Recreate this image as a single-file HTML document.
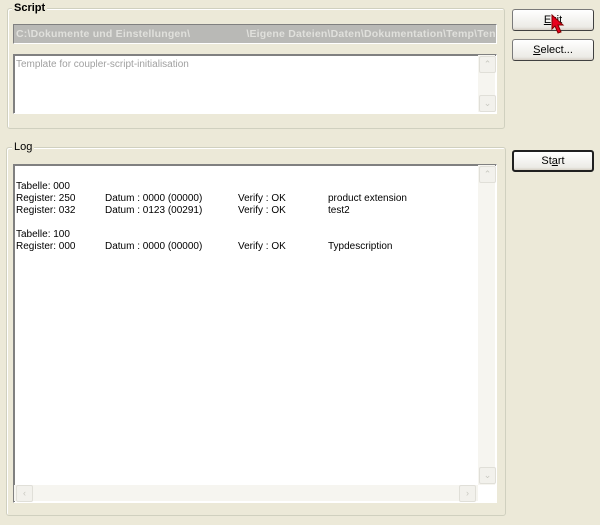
<!DOCTYPE html>
<html><head><style>
body{margin:0;width:600px;height:525px;background:#ECE9D8;font-family:"Liberation Sans",sans-serif;font-size:10px;position:relative;overflow:hidden}
.a{position:absolute}
.gb{position:absolute;border:1px solid #D0D0BF;border-radius:3px;box-shadow:1px 1px 0 #fff inset}
.gt{position:absolute;background:#ECE9D8;padding:0 2px;font-weight:bold;color:#000;font-size:11px}
.btn{position:absolute;width:82px;height:22px;border-radius:3px;background:linear-gradient(#fff,#ECEBE6 85%,#D6D0C5);text-align:center;line-height:20px;color:#000;box-sizing:border-box;border:1px solid;border-color:#7a7a7a #404040 #404040 #7a7a7a;font-size:11px}
.ta{position:absolute;background:#fff;border:1px solid;border-color:#808080 #fff #fff #808080;box-shadow:1px 1px 0 #808080 inset}
.sb{position:absolute;background:#F6F5F0}
.sbtn{position:absolute;width:15px;height:15px;border:1px solid #E0DFD8;border-radius:2px;background:#F2F1EC;color:#C8C8C0;font-size:9px;text-align:center;line-height:15px}
.l{position:absolute;white-space:pre;color:#000}
</style></head><body>
<div class="gb" style="left:7px;top:8px;width:496px;height:119px"></div>
<div class="gt" style="left:12px;top:2px">Script</div>
<div class="a" style="left:13px;top:24px;width:484px;height:20px;background:#B9B9B6;border:1px solid;border-color:#808080 #fff #fff #808080;box-sizing:border-box;color:#E0E0DC;font-weight:bold;line-height:18px;padding-left:2px;white-space:nowrap;overflow:hidden;font-size:10.5px;letter-spacing:0.2px">C:\Dokumente und Einstellungen\<span style="color:#C8C8C4">&nbsp;&nbsp;&nbsp;&nbsp;&nbsp;&nbsp;&nbsp;&nbsp;&nbsp;&nbsp;&nbsp;&nbsp;&nbsp;&nbsp;&nbsp;&nbsp;&nbsp;&nbsp;</span>\Eigene Dateien\Daten\Dokumentation\Temp\Ten</div>
<div class="ta" style="left:13px;top:54px;width:482px;height:58px">
<div class="l" style="left:2px;top:4px;color:#A0A0A0">Template for coupler-script-initialisation</div>
<div class="sb" style="left:464px;top:0;width:17px;height:57px"></div>
<div class="sbtn" style="left:465px;top:1px">&#8963;</div>
<div class="sbtn" style="left:465px;top:40px">&#8964;</div>
</div>
<div class="btn" style="left:512px;top:9px"><u>E</u>xit</div>
<div class="btn" style="left:512px;top:39px"><u>S</u>elect...</div>
<div class="btn" style="left:512px;top:150px;border:2px solid #202020;line-height:19px">St<u>a</u>rt</div>
<svg class="a" style="left:551px;top:14px" width="16" height="24"><path d="M1 1 L1 15 L4 12 L7 19 L10 18 L7 11 L12 11 Z" fill="#E8001C" stroke="#800000" stroke-width="1"/></svg>
<div class="gb" style="left:6px;top:147px;width:498px;height:367px"></div>
<div class="gt" style="left:12px;top:141px;font-weight:normal">Log</div>
<div class="ta" style="left:13px;top:164px;width:482px;height:337px">
<div class="l" style="left:2px;top:16px">Tabelle: 000</div>
<div class="l" style="left:2px;top:28px">Register: 250</div><div class="l" style="left:91px;top:28px">Datum : 0000 (00000)</div><div class="l" style="left:224px;top:28px">Verify : OK</div><div class="l" style="left:314px;top:28px">product extension</div>
<div class="l" style="left:2px;top:40px">Register: 032</div><div class="l" style="left:91px;top:40px">Datum : 0123 (00291)</div><div class="l" style="left:224px;top:40px">Verify : OK</div><div class="l" style="left:314px;top:40px">test2</div>
<div class="l" style="left:2px;top:64px">Tabelle: 100</div>
<div class="l" style="left:2px;top:76px">Register: 000</div><div class="l" style="left:91px;top:76px">Datum : 0000 (00000)</div><div class="l" style="left:224px;top:76px">Verify : OK</div><div class="l" style="left:314px;top:76px">Typdescription</div>
<div class="sb" style="left:464px;top:0;width:17px;height:320px"></div>
<div class="sbtn" style="left:465px;top:1px">&#8963;</div>
<div class="sbtn" style="left:465px;top:302px">&#8964;</div>
<div class="sb" style="left:0;top:320px;width:464px;height:16px"></div>
<div class="sbtn" style="left:2px;top:320px">&lsaquo;</div>
<div class="sbtn" style="left:445px;top:320px">&rsaquo;</div>
</div>
</body></html>
